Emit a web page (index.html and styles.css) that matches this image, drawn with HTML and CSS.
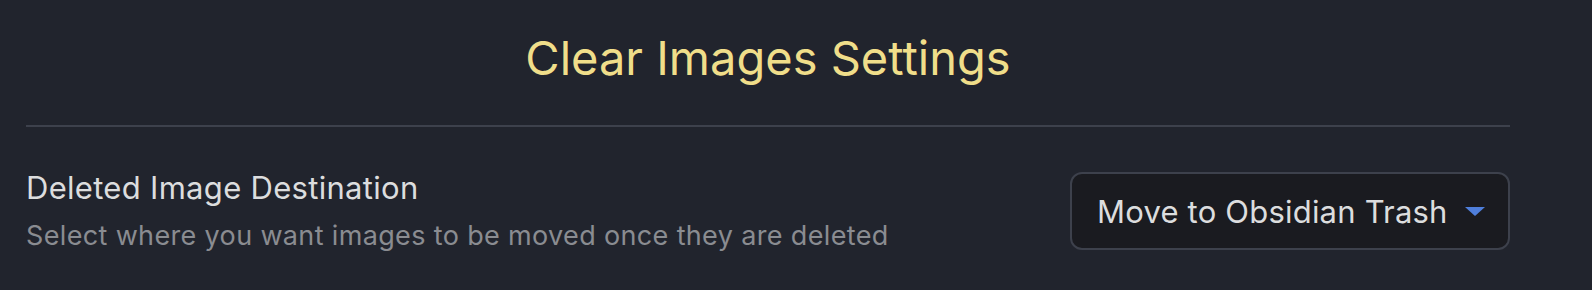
FILE: index.html
```html
<!DOCTYPE html>
<html lang="en">
<head>
    <meta charset="UTF-8">
    <meta name="viewport" content="width=device-width, initial-scale=1.0">
    <title>Clear Images Settings</title>
    <link rel="stylesheet" href="styles.css">
</head>
<body>
    <div class="container">
        <h1 class="title">Clear Images Settings</h1>
        <div class="setting-item">
            <div class="setting-info">
                <div class="setting-name">Deleted Image Destination</div>
                <div class="setting-desc">Select where you want images to be moved once they are deleted</div>
            </div>
            <div class="setting-control">
                <div class="dropdown">
                    <span>Move to Obsidian Trash</span>
                    <svg class="dropdown-arrow" width="20" height="9" viewBox="0 0 20 9">
                        <path d="M0 0 H20 L10 9 Z" fill="#4f7fdb"/>
                    </svg>
                </div>
            </div>
        </div>
    </div>
</body>
</html>
```

FILE: styles.css
```css
body {
    margin: 0;
    background-color: #21242d;
    font-family: Inter, "Noto Sans", sans-serif;
    color: #dcddde;
}

.container {
    padding: 0 82px 0 26px;
}

.title {
    margin: 0;
    padding-top: 29px;
    height: 127px;
    box-sizing: border-box;
    text-align: center;
    font-size: 47px;
    line-height: 57px;
    font-weight: 400;
    color: #f0de8a;
    border-bottom: 2px solid #3d414c;
}

.setting-item {
    display: flex;
    align-items: center;
    justify-content: space-between;
    padding-top: 42px;
}

.setting-name {
    font-size: 31px;
    letter-spacing: 0.3px;
    color: #dcddde;
    line-height: 38px;
}

.setting-desc {
    margin-top: 12px;
    font-size: 27px;
    letter-spacing: 0.35px;
    color: #8a8c91;
    line-height: 34px;
}

.dropdown {
    display: flex;
    align-items: center;
    gap: 17px;
    width: 440px;
    height: 78px;
    box-sizing: border-box;
    padding: 0 23px 0 25px;
    background-color: #1a1b20;
    border: 2px solid #3d414c;
    border-radius: 12px;
    font-size: 31px;
    letter-spacing: 0.2px;
    color: #dcddde;
}

.dropdown span {
    flex: 1;
}

.dropdown-arrow {
    display: block;
}
```
